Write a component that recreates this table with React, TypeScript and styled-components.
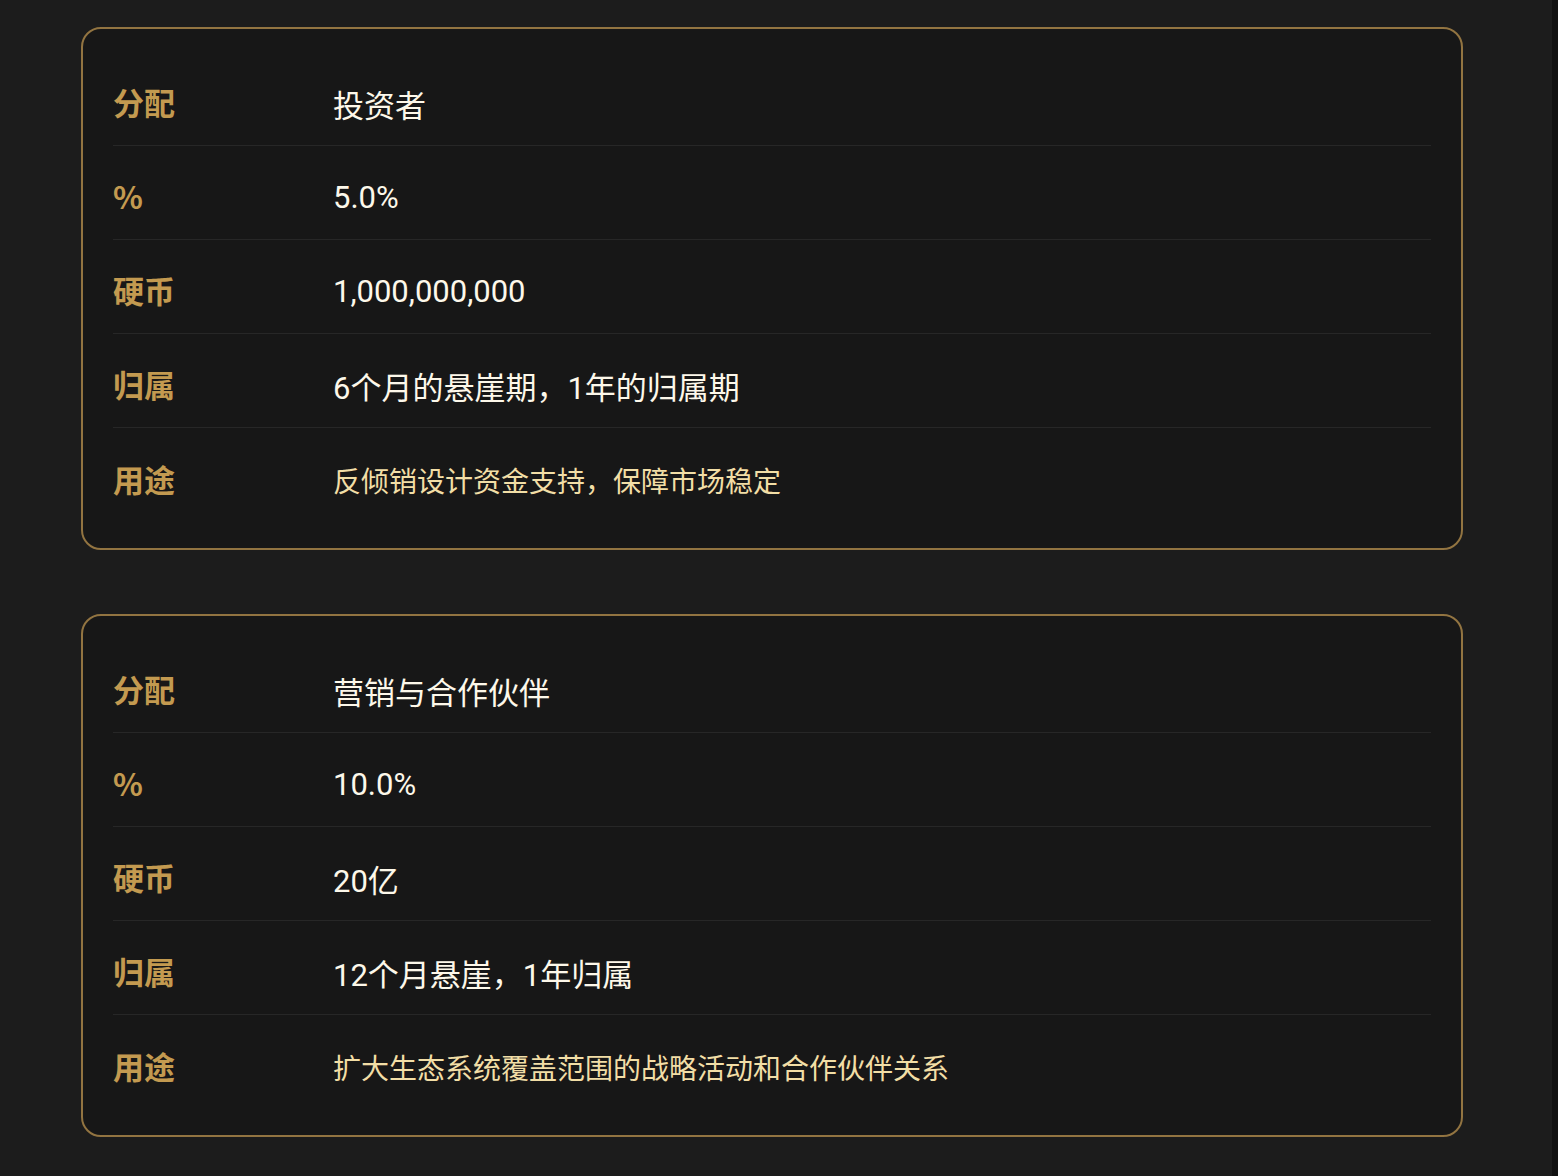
import React from "react";
import styled, { createGlobalStyle } from "styled-components";

const Global = createGlobalStyle`
  html, body { margin: 0; padding: 0; background: #1c1c1c; }
  body { font-family: Roboto, "Noto Sans CJK SC", sans-serif; }
`;

const Page = styled.div`
  display: flex;
  min-height: 1176px;
  background: #1c1c1c;
`;

const Content = styled.main`
  flex: 1;
  display: flex;
  flex-direction: column;
  gap: 64px;
  padding: 27px 89px 40px 81px;
`;

const ScrollStrip = styled.div`
  width: 6px;
  background: #111111;
`;

const Card = styled.section`
  border: 2px solid #927441;
  border-radius: 20px;
  background: #171717;
  padding: 23px 30px 26px;
`;

const Row = styled.div<{ $last?: boolean }>`
  display: grid;
  grid-template-columns: 220px 1fr;
  align-items: center;
  height: 94px;
  box-sizing: border-box;
  padding-top: 6px;
  border-bottom: ${(p) => (p.$last ? "none" : "1px solid #272727")};
`;

const Label = styled.div`
  font-family: "Noto Sans CJK SC", sans-serif;
  font-size: 31px;
  font-weight: 700;
  color: #c39a50;
`;

const Value = styled.div<{ $accent?: boolean }>`
  padding-top: 3px;
  font-size: ${(p) => (p.$accent ? "28px" : "31px")};
  color: ${(p) => (p.$accent ? "#f2dea6" : "#fdf8ea")};
`;

type Item = { dist: string; pct: string; coins: string; vest: string; use: string };

const data: Item[] = [
  {
    dist: "投资者",
    pct: "5.0%",
    coins: "1,000,000,000",
    vest: "6个月的悬崖期，1年的归属期",
    use: "反倾销设计资金支持，保障市场稳定",
  },
  {
    dist: "营销与合作伙伴",
    pct: "10.0%",
    coins: "20亿",
    vest: "12个月悬崖，1年归属",
    use: "扩大生态系统覆盖范围的战略活动和合作伙伴关系",
  },
];

export default function App() {
  return (
    <>
      <Global />
      <Page>
        <Content>
          {data.map((d, i) => (
            <Card key={i}>
              <Row>
                <Label>分配</Label>
                <Value>{d.dist}</Value>
              </Row>
              <Row>
                <Label>%</Label>
                <Value>{d.pct}</Value>
              </Row>
              <Row>
                <Label>硬币</Label>
                <Value>{d.coins}</Value>
              </Row>
              <Row>
                <Label>归属</Label>
                <Value>{d.vest}</Value>
              </Row>
              <Row $last>
                <Label>用途</Label>
                <Value $accent>{d.use}</Value>
              </Row>
            </Card>
          ))}
        </Content>
        <ScrollStrip />
      </Page>
    </>
  );
}
